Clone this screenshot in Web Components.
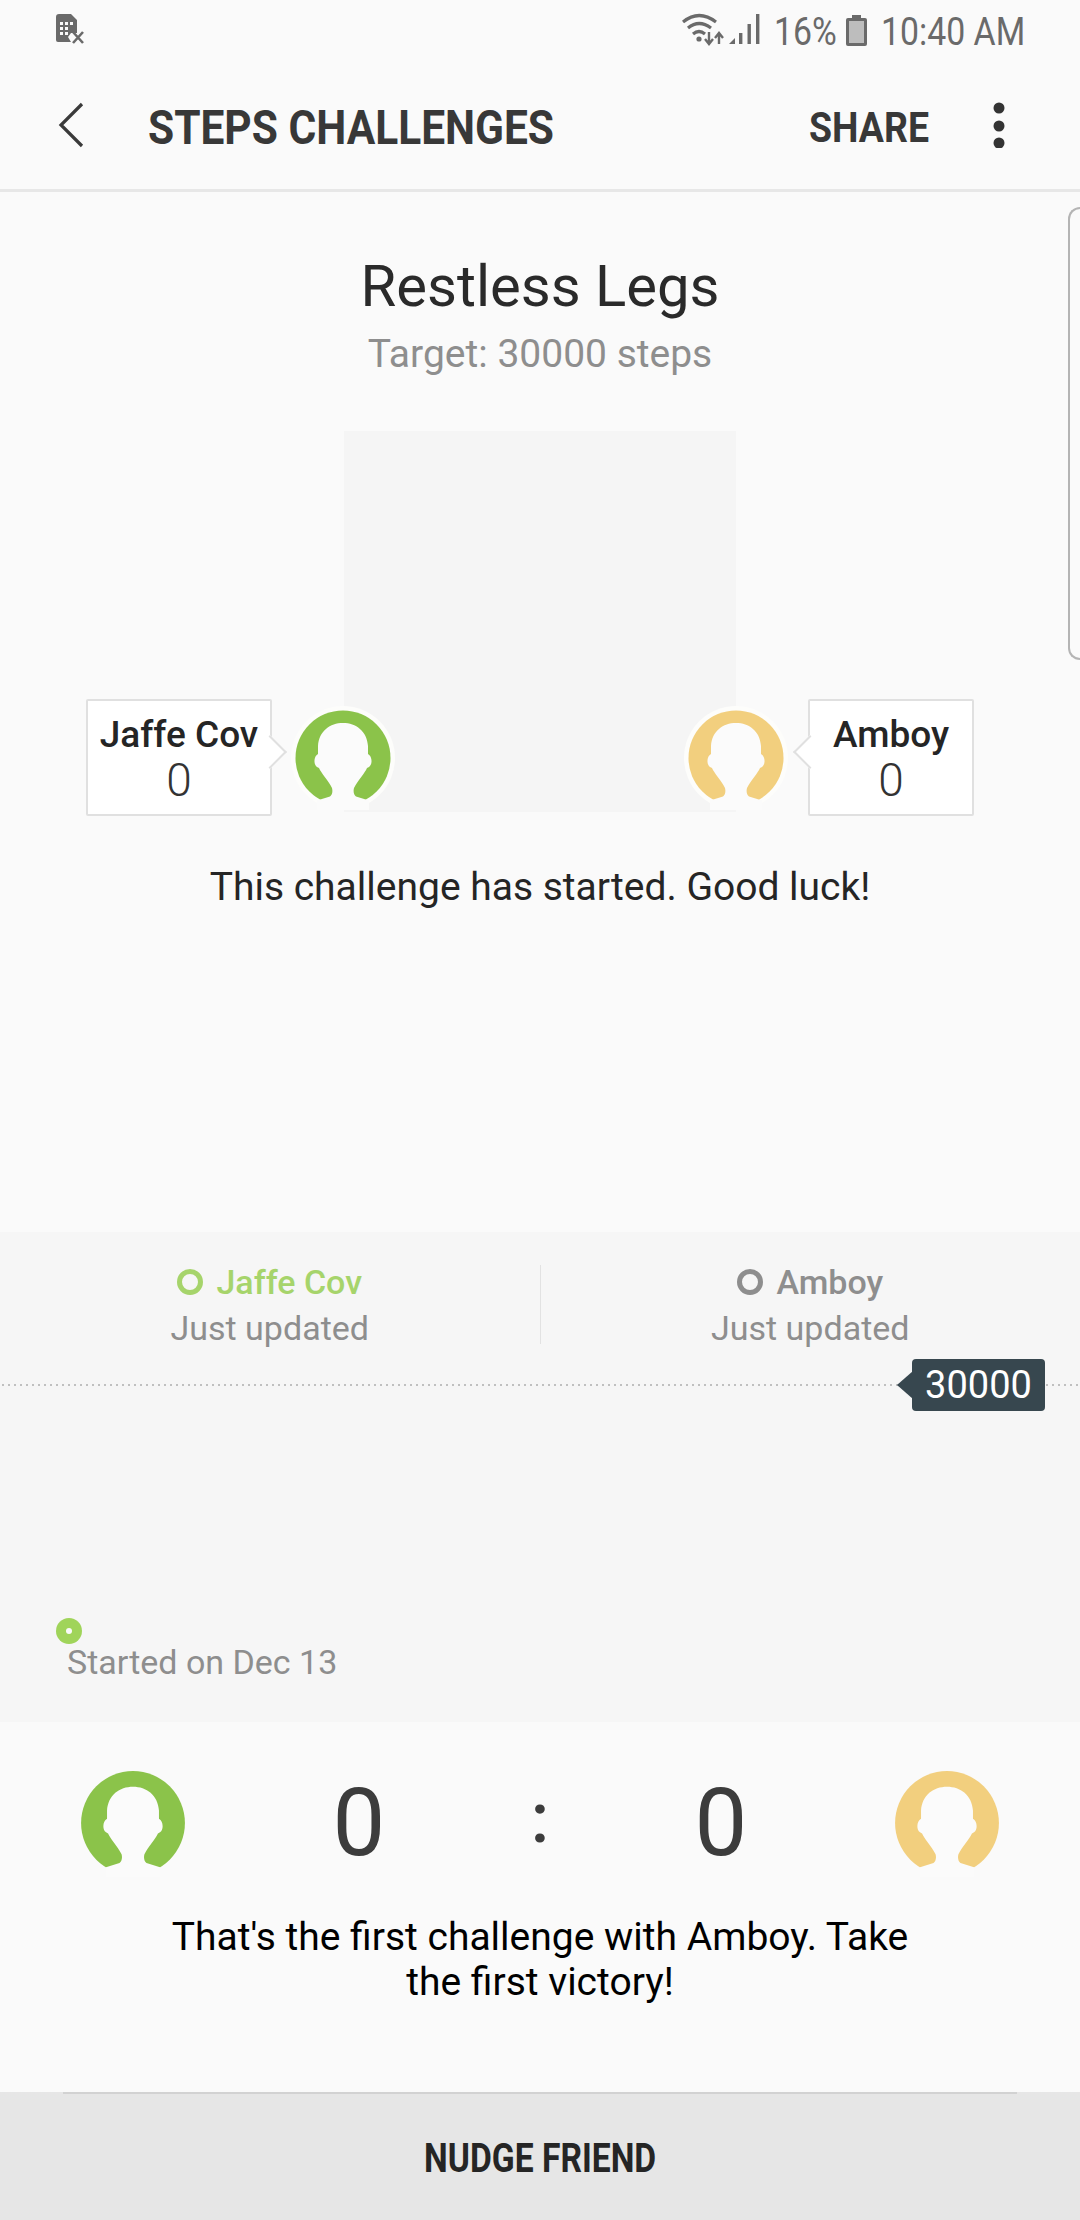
<!DOCTYPE html>
<html><head><meta charset="utf-8"><style>
html,body{margin:0;padding:0;background:#fafafa}
body{width:1080px;height:2220px;overflow:hidden;font-family:Roboto,"Noto Sans",sans-serif;color:#252525}
</style></head><body>
<app-shell>
  <status-bar></status-bar>
  <app-bar></app-bar>
  <challenge-hero title-text="Restless Legs" target="Target: 30000 steps" message="This challenge has started. Good luck!"></challenge-hero>
  <progress-panel></progress-panel>
  <score-row></score-row>
  <nudge-bar></nudge-bar>
</app-shell>
<edge-handle></edge-handle>
<script>
function def(name,html){
  customElements.define(name,class extends HTMLElement{
    constructor(){super();const r=this.attachShadow({mode:'open'});r.innerHTML=typeof html==='function'?html(this):html;}
  });
}
const attr=(el,n,d='')=>el.getAttribute(n)||d;
def('app-shell',`<style>:host{display:flex;flex-direction:column;width:1080px;height:2220px}</style><slot></slot>`);
def('edge-handle',`<style>:host{display:block;position:absolute;left:1068px;top:207px;width:12px;height:453px;box-sizing:border-box;border:2px solid #b4b4b4;border-right:0;border-radius:16px 0 0 16px}</style>`);
def('status-bar',`<style>
:host{display:flex;align-items:center;height:60px;padding:4px 58px 0 55px;box-sizing:border-box;color:#6a6a6a;flex:none}
svg{display:block;flex:none}
.sp{flex:1}
.t{font-size:38px;line-height:46px;display:inline-block;transform:scaleX(.89);white-space:nowrap}
.pct{width:59px;transform-origin:left;margin-left:14px}
.time{width:141px;transform-origin:left;margin-left:14px}
</style>
<svg width="30" height="32" viewBox="0 0 30 32" style="margin-top:-6px"><path d="M1 4 Q1 1 4 1 H16 L22 7 V20 H16 L13 24 L16 29 H3 Q1 29 1 27Z" fill="#6a6a6a"/><path d="M5 9h3v3H5zM10 9h3v3h-3zM15 9h3v3h-3zM5 14h3v3H5zM10 14h3v3h-3zM5 19h3v3H5zM10 19h3v3h-3z" fill="#fafafa"/><path d="M18 19l10 11M28 19L18 30" stroke="#6a6a6a" stroke-width="2.6" fill="none"/></svg>
<span class="sp"></span>
<svg width="78" height="34" viewBox="0 0 78 34" style="margin-top:-4px"><g fill="none" stroke="#6a6a6a" stroke-width="3.2"><path d="M1 9 Q17 -4 34 9"/><path d="M6 15 Q17 6 29 15"/><path d="M11 21 Q17 16 23 21"/></g><circle cx="17" cy="26" r="2.6" fill="#6a6a6a"/><path d="M27 19v11M23 26l4 5 4-5M37 31V20M33 25l4-5 4 5" stroke="#6a6a6a" stroke-width="2.4" fill="none"/><path d="M47 31l6-6v6z" fill="#6a6a6a"/><path d="M57 31V20h3.4v11zM65.500 31V11h3.400v20zM74 31V1h3.400v30z" fill="#6a6a6a"/></svg>
<span class="t pct">16%</span>
<svg width="21" height="31" viewBox="0 0 21 31" style="margin-left:13px;margin-top:-4px"><path d="M6 0h9v3h4q2 0 2 2v24q0 2-2 2H2q-2 0-2-2V5q0-2 2-2h4z" fill="#6a6a6a"/><rect x="3" y="6" width="15" height="22" fill="#bdbdbd"/></svg>
<span class="t time">10:40 AM</span>`);
def('app-bar',`<style>
:host{display:flex;align-items:center;height:132px;box-sizing:border-box;border-bottom:3px solid #e7e7e7;padding:0 0 0 58px;flex:none;color:#383838}
svg{display:block;flex:none}
.ti{font-size:48px;font-weight:700;margin-left:64px;display:inline-block;transform-origin:left;transform:scaleX(.885);white-space:nowrap;width:405px;padding-top:5px}
.sh{font-size:43px;font-weight:700;margin-left:256px;display:inline-block;transform-origin:left;transform:scaleX(.87);white-space:nowrap;width:117px;padding-top:5px}
.m{margin-left:66px}
</style>
<svg width="26" height="46" viewBox="0 0 26 46"><path d="M24 2L3 23l21 21" fill="none" stroke="#3a3a3a" stroke-width="3.200"/></svg>
<span class="ti">STEPS CHALLENGES</span>
<span class="sh">SHARE</span>
<svg class="m" width="14" height="46" viewBox="0 0 14 46"><circle cx="7" cy="6" r="5.500" fill="#333"/><circle cx="7" cy="24" r="5.500" fill="#333"/><circle cx="7" cy="41" r="5.500" fill="#333"/></svg>`);
const FACE='M50 15C37 15 26 23 25 38L25 46C21 48 20 56 24 59L26 60C28 65 35 72 39 80C40 84 39 87 37 88.500L24 92.500L24 104L76 104L76 92.500L63 88.500C61 87 60 84 61 80C65 72 72 65 74 60L76 59C80 56 79 48 75 46L75 38C74 23 63 15 50 15Z';
def('user-avatar',el=>{
  const c=attr(el,'color','#8bc34a'),s=attr(el,'size','104'),h=el.hasAttribute('halo'),bg=attr(el,'bg','#fbfbfb');
  return `<style>:host{display:block;width:${s}px;height:${s}px;flex:none}svg{display:block}</style>
  <svg width="${s}" height="${s}" viewBox="-2 -2 104 104"><circle cx="50" cy="50" r="${h?52:50}" fill="${h?'#fdfdfb':c}"/>${h?`<circle cx="50" cy="50" r="47.500" fill="${c}"/>`:''}<path d="${FACE}" fill="${bg}"/></svg>`;
});
def('name-bubble',el=>{
  const left=attr(el,'tip')==='left';
  return `<style>
  :host{display:block;position:relative;box-sizing:border-box;width:${attr(el,'w','186')}px;height:117px;background:#fff;border:2px solid #e0e0e0;border-radius:2px;text-align:center;flex:none}
  .n{font-size:37px;font-weight:500;line-height:44px;margin-top:12px;color:#252525}
  .v{font-size:46px;font-weight:300;line-height:46px;color:#333}
  .tip{position:absolute;top:39px;${left?'left:-12px':'right:-12px'};width:24px;height:24px;background:#fff;border:solid #e0e0e0;border-width:${left?'0 0 2px 2px':'2px 2px 0 0'};box-sizing:border-box;transform:rotate(45deg)}
  </style><div class="tip"></div><div class="n">${attr(el,'name')}</div><div class="v">${attr(el,'value')}</div>`;
});
def('challenge-hero',el=>`<style>
:host{display:flex;flex-direction:column;align-items:center;height:1040px;flex:none}
h1{font-size:58px;font-weight:400;line-height:70px;margin:59px 0 0;color:#2a2a2a}
.tg{font-size:39px;line-height:46px;color:#8e8e8e;margin-top:10px}
.stage{display:grid;width:1080px;height:385px;margin-top:54px}
.sq{grid-area:1/1;justify-self:center;width:392px;height:381px;background:#f5f5f5}
.row{grid-area:1/1;align-self:end;display:flex;align-items:flex-end;box-sizing:border-box;padding:0 106px 0 86px}
.av{margin:0 0 6px 19px}.av2{margin:0 20px 6px 289px}
p{font-size:39px;line-height:46px;margin:48px 0 0;color:#252525}
</style>
<h1>${attr(el,'title-text')}</h1><div class="tg">${attr(el,'target')}</div>
<div class="stage"><div class="sq"></div>
<div class="row"><name-bubble name="Jaffe Cov" value="0" tip="right"></name-bubble><user-avatar class="av" halo color="#8bc34a"></user-avatar><user-avatar class="av2" halo color="#f2cf7e"></user-avatar><name-bubble name="Amboy" value="0" tip="left" w="166"></name-bubble></div></div>
<p>${attr(el,'message')}</p>`);
def('legend-item',el=>`<style>
:host{display:flex;flex-direction:column;align-items:center;justify-content:flex-start}
.a{display:flex;align-items:center;font-size:34px;font-weight:500;line-height:46px;color:${attr(el,'color')}}
.d{width:26px;height:26px;border:5px solid ${attr(el,'color')};border-radius:50%;box-sizing:border-box;margin-right:13px}
.b{font-size:34px;line-height:46px;color:#8e8e8e}
</style><div class="a"><span class="d"></span>${attr(el,'name')}</div><div class="b">Just updated</div>`);
def('progress-panel',`<style>
:host{display:flex;flex-direction:column;height:490px;background:#f6f6f6;flex:none;box-sizing:border-box}
.lg{display:grid;grid-template-columns:1fr 1px 1fr;height:113px;margin-top:27px;align-items:start}
.dv{background:#e2e2e2;height:79px;margin-top:6px}
.ch{position:relative;flex:1;margin-top:12px;background:radial-gradient(circle,#c0c0c0 1px,transparent 1.4px) 0 -6px/6px 14px repeat-x}
.tag{position:absolute;left:912px;top:-25px;width:133px;height:52px;background:#37474f;border-radius:4px;color:#fff;font-size:38px;line-height:52px;text-align:center}
.tag:before{content:"";position:absolute;left:-15px;top:12px;width:0;height:0;border:14px solid transparent;border-left:0;border-right:16px solid #37474f}
.dot{position:absolute;left:56px;top:234px;width:26px;height:26px;border-radius:50%;background:#a0d45a}
.dot:after{content:"";position:absolute;left:10px;top:10px;width:6px;height:6px;border-radius:50%;background:#fafafa}
.st{position:absolute;left:67px;top:255px;font-size:34px;line-height:46px;color:#8e8e8e}
</style>
<div class="lg"><legend-item name="Jaffe Cov" color="#a6d46b"></legend-item><div class="dv"></div><legend-item name="Amboy" color="#8e8e8e"></legend-item></div>
<div class="ch"><div class="tag">30000</div><div class="dot"></div><div class="st">Started on Dec 13</div></div>`);
def('score-row',`<style>
:host{display:flex;flex-direction:column;height:370px;flex:none;align-items:center}
.g{display:grid;grid-template-columns:266px 186px 176px 186px 266px;width:1080px;align-items:center;justify-items:center;margin-top:47px;height:108px}
.n{font-size:94px;line-height:108px;color:#3c3c3c}
.c{font-size:70px;line-height:98px;margin-bottom:10px;font-weight:500;color:#3c3c3c}
p{margin:38px 0 0;width:800px;text-align:center;font-size:39px;line-height:45px;color:#000}
</style>
<div class="g"><user-avatar color="#8bc34a" size="108"></user-avatar><span class="n">0</span><span class="c">:</span><span class="n">0</span><user-avatar color="#f2cf7e" size="108"></user-avatar></div>
<p>That's the first challenge with Amboy. Take<br>the first victory!</p>`);
def('nudge-bar',`<style>
:host{display:flex;align-items:center;justify-content:center;position:relative;height:128px;background:#e6e6e6;flex:none;box-sizing:border-box;padding-top:4px}
:host:before{content:"";position:absolute;left:63px;right:63px;top:0;height:2px;background:#d2d2d2}
span{font-size:40px;font-weight:700;color:#252525;display:inline-block;transform:scaleX(.84);white-space:nowrap}
</style><span>NUDGE FRIEND</span>`);
</script>
</body></html>
